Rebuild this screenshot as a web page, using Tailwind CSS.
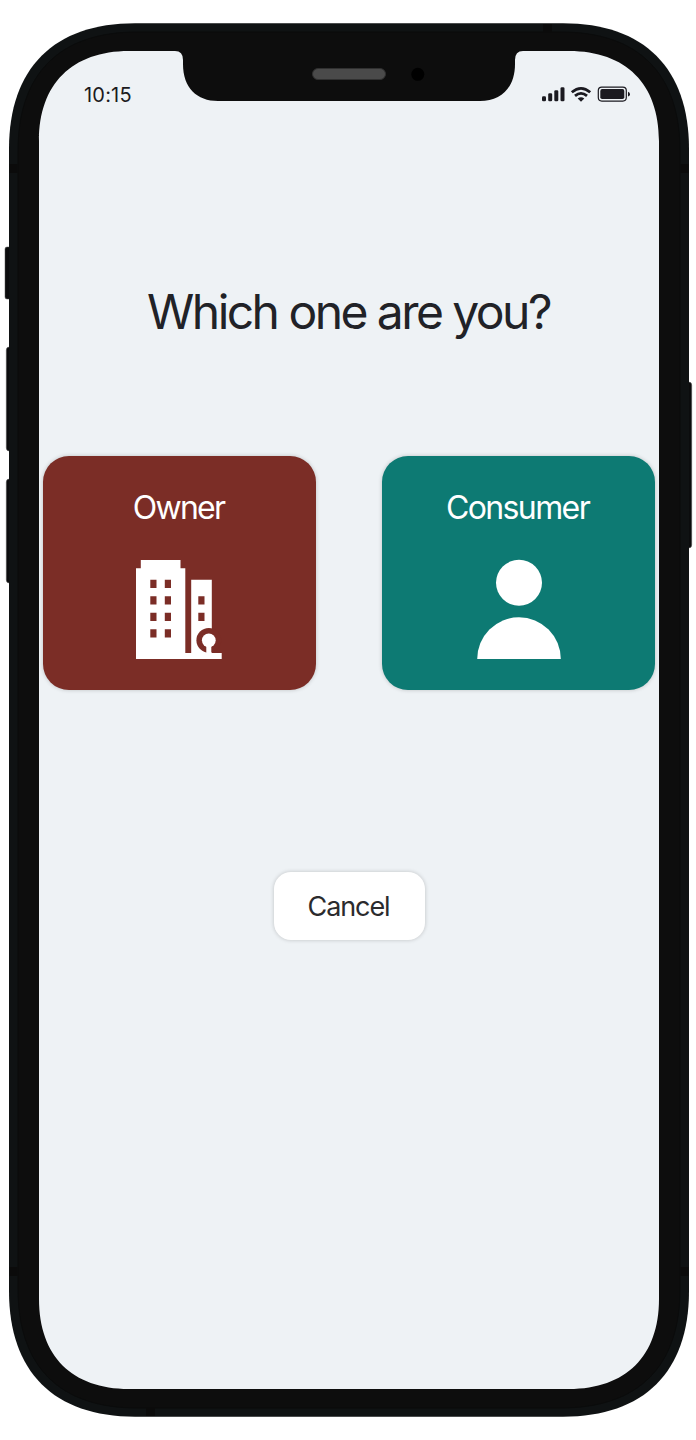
<!DOCTYPE html>
<html lang="en">
<head>
<meta charset="utf-8">
<title>Which one are you?</title>
<script src="https://cdn.jsdelivr.net/npm/@tailwindcss/browser@4"></script>
</head>
<body class="bg-white font-['Inter',sans-serif]">
<div class="relative w-[696px] h-[1440px] overflow-hidden">
  <!-- Phone frame -->
  <svg class="absolute inset-0" width="696" height="1440" viewBox="0 0 696 1440" fill="none" aria-hidden="true">
    <g fill="#0b0c0d" stroke="#555" stroke-width=".5">
      <rect x="5" y="247" width="12" height="52" rx="2"/>
      <rect x="6.3" y="347" width="12" height="104" rx="3"/>
      <rect x="6.3" y="479" width="12" height="104" rx="3"/>
      <rect x="680" y="382" width="11.7" height="166" rx="3"/>
    </g>
    <path d="M135 23.200H563C644 23.200 689 68 689 149V1291C689 1372 644 1416.700 563 1416.700H135C54 1416.700 9 1372 9 1291V149C9 68 54 23.200 135 23.200Z" fill="#0f1213"/>
    <path d="M137 32H561C639 32 680 74 680 151V1289C680 1366 639 1408 561 1408H137C59 1408 18 1366 18 1289V151C18 74 59 32 137 32Z" fill="#0d0d0d" stroke="#0a0b0b"/>
    <path fill="#0b0b0b" d="M9.500 164h8v9h-8zM680.500 164h8v9h-8zM9.500 1267h8v9h-8zM680.500 1267h8v9h-8zM543 24h9v8h-9zM146 1408h9v8h-9z"/>
    <path d="M129 51H175Q183 51 183 60V64C183 88 197 101 218 101H480C501 101 515 88 515 64V60Q515 51 523 51H569C626 51 659 84 659 141V1299C659 1356 626 1389 569 1389H129C72 1389 39 1356 39 1299V141C39 84 72 51 129 51Z" fill="#eef2f5"/>
    <rect x="312.500" y="68.500" width="73" height="11" rx="5.500" fill="#4a4a4a" stroke="#303030"/>
    <circle cx="417.800" cy="74.300" r="6.500" fill="#000"/>
  </svg>

  <main class="relative ml-[39px] mt-[51px] flex h-[1338px] w-[620px] flex-col items-center">
    <header class="flex h-[86px] w-full items-center justify-between pl-[45px] pr-[29px] text-[#1b1a20]">
      <time class="pt-px text-[20px] leading-6 tracking-[0.2px]">10:15</time>
      <svg width="89" height="18" viewBox="541 85 89 18" fill="currentColor" aria-label="Signal, Wi-Fi, battery">
        <rect x="542" y="96.200" width="4" height="5" rx="1.300"/>
        <rect x="548.200" y="93.300" width="4" height="7.900" rx="1.300"/>
        <rect x="554.300" y="90.300" width="4" height="10.900" rx="1.300"/>
        <rect x="560.500" y="87.200" width="4" height="14" rx="1.300"/>
        <g fill="none" stroke="currentColor" stroke-width="2.800">
          <path d="M571.800 92.300Q581 84.400 590.200 92.300"/>
          <path d="M575 95.900Q581 90.900 587 95.900"/>
        </g>
        <path d="M577.700 98.600Q581 95.800 584.300 98.600L581 101.700Z"/>
        <rect x="598.300" y="87.100" width="28" height="14" rx="3.500" fill="none" stroke="currentColor" stroke-width="1.200"/>
        <rect x="600.300" y="89.100" width="24" height="10" rx="1.800"/>
        <path d="M628 91.800Q630 92.500 630 94.200T628 96.600Z"/>
      </svg>
    </header>

    <h1 class="mt-[146px] h-[58px] whitespace-nowrap pr-px text-[48px] leading-[58px] tracking-[-2.55px] text-[#212227]">Which one are you?</h1>

    <div class="mt-[115px] flex gap-[66px]">
      <button class="flex h-[234px] w-[273px] flex-col items-center rounded-[26px] bg-[#7b2d26] pt-8 text-white shadow-[0_0_4px_rgba(0,0,0,0.2)]">
        <span class="h-10 pr-0.5 text-[32px] leading-10 tracking-[-1.8px]">Owner</span>
        <svg class="mr-[2px] mt-8" width="86" height="99" viewBox="135.500 560 86 99" fill="currentColor" aria-hidden="true">
          <path d="M140.300 560h39.700v8.200h4.800v91h-49.300v-91h4.800zM190.700 579.700h20.600v74h-20.600z"/>
          <path fill="#7b2d26" d="M149.800 579.700h6.200v8.300h-6.200zm14.500 0h6.200v8.300h-6.200zM149.800 596.300h6.200v8.300h-6.200zm14.500 0h6.200v8.300h-6.200zM149.800 612.800h6.200v8.300h-6.200zm14.500 0h6.200v8.300h-6.200zM149.800 629.200h6.200v8.300h-6.200zm14.500 0h6.200v8.300h-6.200zM197.800 596.300h6.200v8.300h-6.200zm0 16.500h6.200v8.300h-6.200z"/>
          <circle cx="208.300" cy="640.300" r="12.400" fill="#7b2d26"/>
          <circle cx="208.300" cy="640.300" r="6.900"/>
          <path d="M205.800 645h5v8h10.400v6h-86v-6h70.600z"/>
        </svg>
      </button>
      <button class="flex h-[234px] w-[273px] flex-col items-center rounded-[26px] bg-[#0d7a73] pt-8 text-white shadow-[0_0_4px_rgba(0,0,0,0.2)]">
        <span class="h-10 pr-0.5 text-[32px] leading-10 tracking-[-1.6px]">Consumer</span>
        <svg class="mt-8 overflow-visible" width="84" height="99" viewBox="0 0 84 99" fill="currentColor" aria-hidden="true">
          <circle cx="42" cy="22.800" r="23"/>
          <path d="M.2 99a41.800 41.800 0 0 1 83.600 0z"/>
        </svg>
      </button>
    </div>

    <button class="mt-[182px] flex h-[68px] w-[151px] items-center justify-center rounded-[17px] bg-white pr-px pt-0.5 text-[27px] tracking-[-1.1px] text-[#2b2b2d] shadow-[0_0_4px_rgba(0,0,0,0.2)]">Cancel</button>
  </main>
</div>
</body>
</html>
